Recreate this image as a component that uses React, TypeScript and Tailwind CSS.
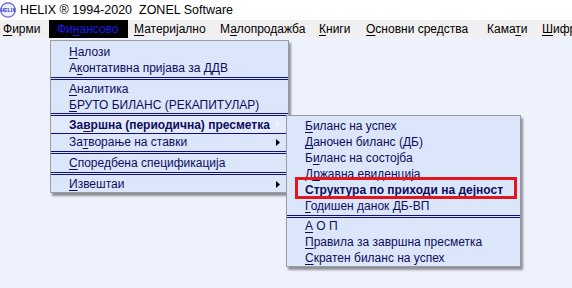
import React from 'react';

// one entry per menu row; u = index of the underlined (accelerator) letter
type Row = { text: string; u: number; bold?: boolean; arrow?: boolean; active?: boolean; marked?: boolean } | 'sep';

const menuBar = [
  { text: 'Фирми', u: 0, w: 'w-[49px] pl-[3px]' },
  { text: 'Финансово', u: 2, w: 'w-[79px] pl-[8px]', open: true },
  { text: 'Материјално', u: 0, w: 'w-[86px] pl-[6px]' },
  { text: 'Малопродажба', u: 1, w: 'w-[99px] pl-[6px]' },
  { text: 'Книги', u: 0, w: 'w-[47px] pl-[6px]' },
  { text: 'Основни средства', u: 0, w: 'w-[121px] pl-[6px]' },
  { text: 'Камати', u: 4, w: 'w-[55px] pl-[6px]' },
  { text: 'Шифрарници', u: 0, w: 'pl-[6px]' },
];

const finansovo: Row[] = [
  { text: 'Налози', u: 0 },
  { text: 'Аконтативна пријава за ДДВ', u: 1 },
  'sep',
  { text: 'Аналитика', u: 0 },
  { text: 'БРУТО БИЛАНС (РЕКАПИТУЛАР)', u: 0 },
  'sep',
  { text: 'Завршна (периодична) пресметка', u: 2, bold: true, arrow: true, active: true },
  { text: 'Затворање на ставки', u: 2, arrow: true },
  'sep',
  { text: 'Споредбена спецификација', u: 0 },
  'sep',
  { text: 'Извештаи', u: 0, arrow: true },
];

const zavrsna: Row[] = [
  { text: 'Биланс на успех', u: 0 },
  { text: 'Даночен биланс (ДБ)', u: 0 },
  { text: 'Биланс на состојба', u: 1 },
  { text: 'Државна евиденција', u: 1 },
  { text: 'Структура по приходи на дејност', u: 1, bold: true, marked: true },
  { text: 'Годишен данок ДБ-ВП', u: 0 },
  'sep',
  { text: 'А О П', u: 0 },
  { text: 'Правила за завршна пресметка', u: 0 },
  { text: 'Скратен биланс на успех', u: 0 },
];

const Label = ({ text, u }: { text: string; u: number }) => (
  <span className="whitespace-nowrap">
    {text.slice(0, u)}
    <span className="underline underline-offset-[2px] decoration-1">{text[u]}</span>
    {text.slice(u + 1)}
  </span>
);

const Arrow = ({ light }: { light?: boolean }) => (
  <svg width="4" height="7" viewBox="0 0 4 7" className="ml-auto mr-[8px]">
    <polygon points="0,0 4,3.5 0,7" fill={light ? '#f4f6fb' : '#000'} />
  </svg>
);

const Menu = ({ rows, sepH }: { rows: Row[]; sepH: (i: number) => string }) => (
  <>
    {rows.map((r, i) =>
      r === 'sep' ? (
        <div key={i} className={`flex items-center ${sepH(i)}`}>
          <div className="w-full h-[3px] border-y border-[#10107a]" />
        </div>
      ) : (
        <div
          key={i}
          className={`relative flex items-center pl-[18px] ${
            r.active ? 'h-[18px] border-b border-[#10107a] bg-[#e2eafb]' : 'h-[16px]'
          } ${r.bold ? 'font-bold' : ''}`}
        >
          <Label text={r.text} u={r.u} />
          {r.arrow && <Arrow light={r.active} />}
          {r.marked && (
            <div className="absolute top-[-5px] bottom-[-1px] left-[8px] right-[3px] border-[3px] border-[#e3161e]" />
          )}
        </div>
      )
    )}
  </>
);

const Logo = () => (
  <svg width="16" height="16" viewBox="0 0 16 16">
    <circle cx="8" cy="8" r="7.2" fill="#eef0ff" stroke="#6a5acd" strokeWidth="1.2" />
    <text x="8" y="10" textAnchor="middle" fontSize="5.2" fontWeight="bold" fill="#1e3ccf" fontFamily="Liberation Sans, Arial, sans-serif">
      HELIX
    </text>
  </svg>
);

export default function App() {
  return (
    <div className="relative w-[572px] h-[288px] overflow-hidden bg-[#edf2fc] font-['Liberation_Sans',Arial,sans-serif] text-[12px] text-black">
      {/* title bar */}
      <div className="h-[20px] bg-white flex items-center gap-[4px] pl-[0px]">
        <Logo />
        <span className="text-[12.5px] whitespace-pre">HELIX ® 1994-2020  ZONEL Software</span>
      </div>

      {/* menu bar */}
      <div className="h-[18px] bg-[#f0f0f0] flex items-stretch overflow-hidden">
        {menuBar.map((m) => (
          <div
            key={m.text}
            className={`flex items-center shrink-0 ${m.w} ${m.open ? 'bg-black text-[#1a1ae8]' : ''}`}
          >
            <Label text={m.text} u={m.u} />
          </div>
        ))}
      </div>

      {/* Финансово dropdown */}
      <div className="absolute left-[50px] top-[40px] w-[239px] bg-[#dce6fa] border border-[#9c9c9c] pt-[3px] text-[#0d0d5e] shadow-[2px_3px_2px_rgba(0,0,0,0.4)]">
        <Menu rows={finansovo} sepH={(i) => (i === 5 ? 'h-[3px]' : 'h-[5px]')} />
      </div>

      {/* Завршна пресметка submenu */}
      <div className="absolute left-[286px] top-[115px] w-[235px] bg-[#dce6fa] border border-[#9c9c9c] pt-[2px] text-[#0d0d5e] shadow-[2px_3px_2px_rgba(0,0,0,0.4)]">
        <Menu rows={zavrsna} sepH={() => 'h-[4px]'} />
      </div>
    </div>
  );
}
